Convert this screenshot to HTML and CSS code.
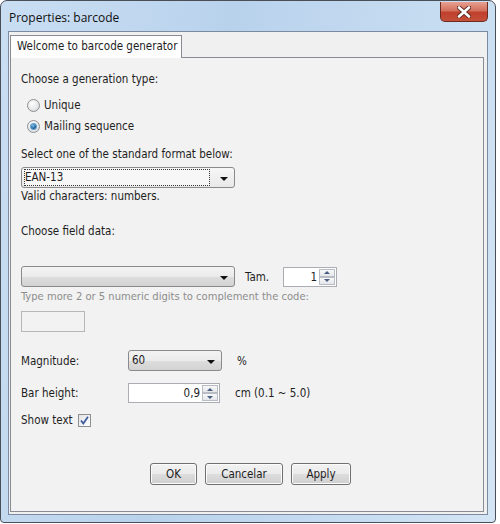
FILE: index.html
```html
<!DOCTYPE html>
<html>
<head>
<meta charset="utf-8">
<link rel="stylesheet" href="styles.css">
</head>
<body>
<div class="window">
  <div class="titlebar">
    <span class="title">Properties: barcode</span>
    <div class="close">
      <svg width="14" height="12" viewBox="0 0 14 12">
        <path d="M2 1.5 L12 10.5 M12 1.5 L2 10.5" stroke="#5a2a25" stroke-width="4.4" stroke-linecap="round"/>
        <path d="M2 1.5 L12 10.5 M12 1.5 L2 10.5" stroke="#ffffff" stroke-width="2.6" stroke-linecap="round"/>
      </svg>
    </div>
  </div>
  <div class="client">
    <div class="tabs"><div class="tab">Welcome to barcode generator</div></div>
    <div class="panel">
      <div class="text r1">Choose a generation type:</div>
      <div class="radio-row r2"><span class="radio"></span><span>Unique</span></div>
      <div class="radio-row r3"><span class="radio checked"><span class="dot"></span></span><span>Mailing sequence</span></div>
      <div class="text r4">Select one of the standard format below:</div>
      <div class="combo wide focus r5">
        <span class="combo-val"><span class="focusbox">EAN-13</span></span>
        <span class="arrow"></span>
      </div>
      <div class="text">Valid characters: numbers.</div>
      <div class="text r7">Choose field data:</div>
      <div class="row r8">
        <div class="combo wide"><span class="combo-val"></span><span class="arrow"></span></div>
        <span class="tam">Tam.</span>
        <div class="spinner small">
          <span class="spin-val">1</span>
          <span class="spin-btns"><span class="up"></span><span class="down"></span></span>
        </div>
      </div>
      <div class="text gray r9">Type more 2 or 5 numeric digits to complement the code:</div>
      <div class="field-disabled r10"></div>
      <div class="row r11">
        <span class="label">Magnitude:</span>
        <div class="combo mag"><span class="combo-val">60</span><span class="arrow"></span></div>
        <span class="unit">%</span>
      </div>
      <div class="row r12">
        <span class="label">Bar height:</span>
        <div class="spinner bar">
          <span class="spin-val">0,9</span>
          <span class="spin-btns"><span class="up"></span><span class="down"></span></span>
        </div>
        <span class="unit2">cm (0.1 ~ 5.0)</span>
      </div>
      <div class="row r13">
        <span>Show text</span>
        <span class="check">
          <svg width="11" height="11" viewBox="0 0 11 11"><path d="M2 5.5 L4.3 8.5 L9 1.8" fill="none" stroke="#3b5a9a" stroke-width="1.7"/></svg>
        </span>
      </div>
      <div class="buttons">
        <span class="btn ok">OK</span>
        <span class="btn cancel">Cancelar</span>
        <span class="btn apply">Apply</span>
      </div>
    </div>
  </div>
</div>
</body>
</html>
```
FILE: styles.css
```css
html, body {
  margin: 0;
  padding: 0;
  background: #ffffff;
}
body {
  font-family: "DejaVu Sans Condensed", "DejaVu Sans", sans-serif;
  font-size: 11.5px;
  color: #1e1e1e;
}
.window {
  width: 496px;
  height: 523px;
  box-sizing: border-box;
  border: 1px solid #4a4f57;
  border-radius: 7px 7px 4px 4px;
  background: linear-gradient(100deg, #c9def3 0%, #b9d2ec 40%, #c6dcf1 75%, #d4e5f5 100%);
  padding: 0 7px 7px 7px;
  display: flex;
  flex-direction: column;
}
.titlebar {
  height: 30px;
  display: flex;
  align-items: flex-start;
  position: relative;
}
.title {
  font-family: "Open Sans", sans-serif;
  font-size: 12px;
  color: #101010;
  margin-top: 8px;
  margin-left: 1px;
}
.close {
  position: absolute;
  right: 0;
  top: 1px;
  width: 48px;
  height: 20px;
  box-sizing: border-box;
  border: 1px solid #6b2a22;
  border-top: none;
  border-radius: 0 0 5px 5px;
  background: linear-gradient(#e8a090 0%, #d2705e 45%, #c0402c 55%, #c4503a 100%);
  display: flex;
  align-items: center;
  justify-content: center;
}
.client {
  flex: 1;
  background: #f0f0f0;
  border: 1px solid #7c8aa0;
  padding: 3px 3px 2px 1px;
  display: flex;
  flex-direction: column;
}
.tabs {
  display: flex;
  height: 22px;
}
.tab {
  width: 172px;
  box-sizing: border-box;
  height: 23px;
  border: 1px solid #898c95;
  border-bottom: none;
  background: #fdfdfd;
  padding-left: 6px;
  line-height: 20px;
  position: relative;
  z-index: 1;
  white-space: nowrap;
}
.panel {
  flex: 1;
  border: 1px solid #898c95;
  background: #f2f2f2;
  padding: 13px 10px 0 10px;
  display: flex;
  flex-direction: column;
  align-items: flex-start;
}
.text {
  line-height: 16px;
  height: 16px;
  white-space: nowrap;
}
.gray { color: #8d8d8d; font-size: 11.1px; }
.r2 { margin-top: 10px; }
.r3 { margin-top: 5px; }
.r4 { margin-top: 12px; }
.r5 { margin-top: 5px; }
.r7 { margin-top: 19px; }
.r8 { margin-top: 27px; }
.r9 { margin-top: 2px; }
.r10 { margin-top: 6px; }
.r11 { margin-top: 18px; }
.r12 { margin-top: 12px; }
.r13 { margin-top: 10px; }
.radio-row {
  display: flex;
  align-items: center;
  height: 16px;
  padding-left: 6px;
  gap: 4px;
}
.radio {
  width: 13px;
  height: 13px;
  box-sizing: border-box;
  border-radius: 50%;
  border: 1px solid #8c8f94;
  background: radial-gradient(circle at 40% 35%, #ffffff 0%, #e6e6e6 60%, #d2d2d2 100%);
  display: flex;
  align-items: center;
  justify-content: center;
}
.radio .dot {
  width: 5px;
  height: 5px;
  border-radius: 50%;
  background: radial-gradient(circle at 40% 35%, #7fc4ef 0%, #1f5f95 60%, #0e3b6b 100%);
  box-shadow: 0 0 0 1px #5aa0d6;
}
.row {
  display: flex;
  align-items: center;
}
.combo {
  height: 21px;
  box-sizing: border-box;
  border: 1px solid #8a8a8a;
  border-radius: 3px;
  background: linear-gradient(#f3f3f3 0%, #ebebeb 50%, #dddddd 51%, #d3d3d3 100%);
  display: flex;
  align-items: center;
}
.combo.wide { width: 214px; }
.combo.focus { background: linear-gradient(#f7f7f7, #e8e8e8); }
.combo.mag { width: 94px; }
.combo-val {
  flex: 1;
  padding-left: 3px;
  line-height: 17px;
  display: flex;
  align-items: center;
  height: 100%;
}
.focusbox {
  display: block;
  width: 184px;
  height: 15px;
  line-height: 15px;
  border: 1px dotted #333;
  margin-left: -1px;
  background: #f7f7f7;
}
.arrow {
  width: 21px;
  height: 100%;
  display: flex;
  align-items: center;
  justify-content: center;
}
.arrow::before {
  content: "";
  border-left: 4px solid transparent;
  border-right: 4px solid transparent;
  border-top: 4px solid #111;
  margin-top: 2px;
}
.tam {
  margin-left: 10px;
  width: 38px;
}
.spinner {
  height: 20px;
  box-sizing: border-box;
  border: 1px solid #abadb3;
  background: #ffffff;
  display: flex;
  align-items: stretch;
}
.spinner.small { width: 54px; }
.spinner.bar { width: 92px; }
.spin-val {
  flex: 1;
  text-align: right;
  line-height: 18px;
  padding-right: 2px;
}
.spin-btns {
  width: 16px;
  display: flex;
  flex-direction: column;
  padding: 1px 1px 1px 0;
}
.spin-btns span {
  flex: 1;
  box-sizing: border-box;
  border: 1px solid #b8bcc4;
  background: linear-gradient(#f8f8f8, #e4e6ea);
  display: flex;
  align-items: center;
  justify-content: center;
}
.spin-btns .up::before {
  content: "";
  border-left: 3px solid transparent;
  border-right: 3px solid transparent;
  border-bottom: 3px solid #4a5c80;
}
.spin-btns .down::before {
  content: "";
  border-left: 3px solid transparent;
  border-right: 3px solid transparent;
  border-top: 3px solid #4a5c80;
}
.field-disabled {
  width: 64px;
  height: 21px;
  box-sizing: border-box;
  border: 1px solid #b7b7b7;
  background: #f2f2f2;
}
.label {
  width: 107px;
}
.unit { margin-left: 15px; }
.unit2 { margin-left: 15px; }
.check {
  width: 13px;
  height: 13px;
  box-sizing: border-box;
  border: 1px solid #8e8f8f;
  background: linear-gradient(135deg, #e0e2e6, #ffffff);
  margin-left: 5px;
  display: flex;
  align-items: center;
  justify-content: center;
}
.buttons {
  margin-top: 36px;
  align-self: stretch;
  display: flex;
  justify-content: center;
  gap: 8px;
  padding-left: 7px;
}
.btn {
  height: 22px;
  box-sizing: border-box;
  border: 1px solid #707070;
  border-radius: 3px;
  background: linear-gradient(#f2f2f2 0%, #ebebeb 50%, #dddddd 51%, #cfcfcf 100%);
  box-shadow: inset 0 0 0 1px #fcfcfc;
  display: flex;
  align-items: center;
  justify-content: center;
  line-height: 20px;
}
.ok { width: 47px; }
.cancel { width: 78px; }
.apply { width: 60px; }
```
